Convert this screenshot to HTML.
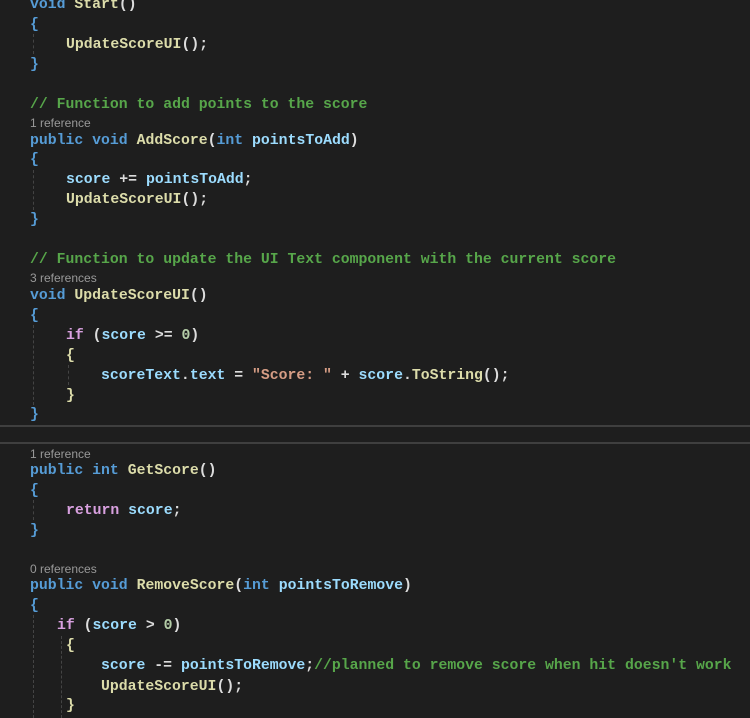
<!DOCTYPE html><html><head><style>
body{margin:0;width:750px;height:718px;background:#1e1e1e;overflow:hidden;position:relative;font-family:"Liberation Mono",monospace;font-size:14.8px;font-weight:bold;color:#dcdcdc}
.l{position:absolute;white-space:pre;line-height:20px;height:20px;margin-top:2px}
.c{position:absolute;left:30px;font-family:"Liberation Sans",sans-serif;font-weight:normal;font-size:12px;color:#999;line-height:16px}
.k{color:#569cd6}.m{color:#dcdcaa}.p{color:#9cdcfe}.g{color:#57a64a}.s{color:#d69d85}.n{color:#b5cea8}.f{color:#d8a0df}.b{color:#569cd6}.y{color:#dcdcaa}
.gd{position:absolute;width:0;border-left:1px dashed #444}
</style></head><body>
<div class="l" style="top:-7px;left:30px"><span class="k">void</span> <span class="m">Start</span>()</div>
<div class="l b" style="top:13px;left:30px">{</div>
<div class="l m" style="top:33px;left:66px">UpdateScoreUI<span style="color:#dcdcdc">();</span></div>
<div class="l b" style="top:53px;left:30px">}</div>
<div class="l g" style="top:93px;left:30px">// Function to add points to the score</div>
<div class="c" style="top:115px">1 reference</div>
<div class="l" style="top:129px;left:30px"><span class="k">public void</span> <span class="m">AddScore</span>(<span class="k">int</span> <span class="p">pointsToAdd</span>)</div>
<div class="l b" style="top:148px;left:30px">{</div>
<div class="l" style="top:168px;left:66px"><span class="p">score</span> += <span class="p">pointsToAdd</span>;</div>
<div class="l" style="top:188px;left:66px"><span class="m">UpdateScoreUI</span>();</div>
<div class="l b" style="top:208px;left:30px">}</div>
<div class="l g" style="top:248px;left:30px">// Function to update the UI Text component with the current score</div>
<div class="c" style="top:270px">3 references</div>
<div class="l" style="top:284px;left:30px"><span class="k">void</span> <span class="m">UpdateScoreUI</span>()</div>
<div class="l b" style="top:304px;left:30px">{</div>
<div class="l" style="top:324px;left:66px"><span class="f">if</span> (<span class="p">score</span> &gt;= <span class="n">0</span>)</div>
<div class="l y" style="top:344px;left:66px">{</div>
<div class="l" style="top:364px;left:101px"><span class="p">scoreText</span>.<span class="p">text</span> = <span class="s">"Score: "</span> + <span class="p">score</span>.<span class="m">ToString</span>();</div>
<div class="l y" style="top:384px;left:66px">}</div>
<div class="l b" style="top:403px;left:30px">}</div>
<div style="position:absolute;left:0;top:425px;width:750px;height:2px;background:#3f3f3f"></div>
<div style="position:absolute;left:0;top:442px;width:750px;height:2px;background:#3f3f3f"></div>
<div class="c" style="top:446px">1 reference</div>
<div class="l" style="top:459px;left:30px"><span class="k">public int</span> <span class="m">GetScore</span>()</div>
<div class="l b" style="top:479px;left:30px">{</div>
<div class="l" style="top:499px;left:66px"><span class="f">return</span> <span class="p">score</span>;</div>
<div class="l b" style="top:519px;left:30px">}</div>
<div class="c" style="top:561px">0 references</div>
<div class="l" style="top:574px;left:30px"><span class="k">public void</span> <span class="m">RemoveScore</span>(<span class="k">int</span> <span class="p">pointsToRemove</span>)</div>
<div class="l b" style="top:594px;left:30px">{</div>
<div class="l" style="top:614px;left:57px"><span class="f">if</span> (<span class="p">score</span> &gt; <span class="n">0</span>)</div>
<div class="l y" style="top:634px;left:66px">{</div>
<div class="l" style="top:654px;left:101px"><span class="p">score</span> -= <span class="p">pointsToRemove</span>;<span class="g">//planned to remove score when hit doesn't work</span></div>
<div class="l" style="top:675px;left:101px"><span class="m">UpdateScoreUI</span>();</div>
<div class="l y" style="top:694px;left:66px">}</div>
<div class="gd" style="left:33px;top:34px;height:20px"></div>
<div class="gd" style="left:33px;top:170px;height:40px"></div>
<div class="gd" style="left:33px;top:325px;height:80px"></div>
<div class="gd" style="left:68px;top:365px;height:20px"></div>
<div class="gd" style="left:33px;top:500px;height:20px"></div>
<div class="gd" style="left:33px;top:615px;height:103px"></div>
<div class="gd" style="left:61px;top:636px;height:82px"></div>
</body></html>
